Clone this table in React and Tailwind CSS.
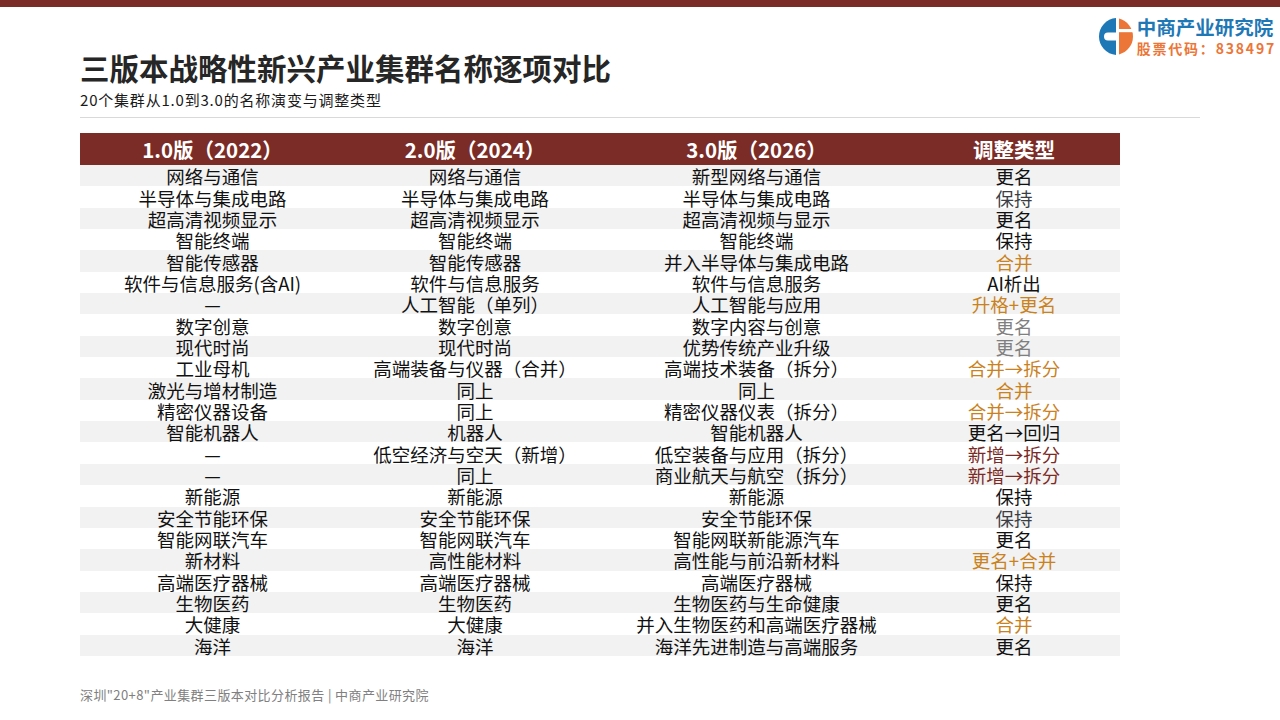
import React from "react";

const BLACK = "text-[#111111]";
const DARK = "text-[#3b3f45]";
const GRAY = "text-[#7f7f7f]";
const ORANGE = "text-[#c9821d]";
const RED = "text-[#7b2a25]";

// 1.0 / 2.0 / 3.0 names, adjustment type, colour of the type
const rows = [
  ["网络与通信", "网络与通信", "新型网络与通信", "更名", BLACK],
  ["半导体与集成电路", "半导体与集成电路", "半导体与集成电路", "保持", DARK],
  ["超高清视频显示", "超高清视频显示", "超高清视频与显示", "更名", BLACK],
  ["智能终端", "智能终端", "智能终端", "保持", BLACK],
  ["智能传感器", "智能传感器", "并入半导体与集成电路", "合并", ORANGE],
  ["软件与信息服务(含AI)", "软件与信息服务", "软件与信息服务", "AI析出", BLACK],
  ["—", "人工智能（单列）", "人工智能与应用", "升格+更名", ORANGE],
  ["数字创意", "数字创意", "数字内容与创意", "更名", GRAY],
  ["现代时尚", "现代时尚", "优势传统产业升级", "更名", GRAY],
  ["工业母机", "高端装备与仪器（合并）", "高端技术装备（拆分）", "合并→拆分", ORANGE],
  ["激光与增材制造", "同上", "同上", "合并", ORANGE],
  ["精密仪器设备", "同上", "精密仪器仪表（拆分）", "合并→拆分", ORANGE],
  ["智能机器人", "机器人", "智能机器人", "更名→回归", BLACK],
  ["—", "低空经济与空天（新增）", "低空装备与应用（拆分）", "新增→拆分", RED],
  ["—", "同上", "商业航天与航空（拆分）", "新增→拆分", RED],
  ["新能源", "新能源", "新能源", "保持", BLACK],
  ["安全节能环保", "安全节能环保", "安全节能环保", "保持", DARK],
  ["智能网联汽车", "智能网联汽车", "智能网联新能源汽车", "更名", BLACK],
  ["新材料", "高性能材料", "高性能与前沿新材料", "更名+合并", ORANGE],
  ["高端医疗器械", "高端医疗器械", "高端医疗器械", "保持", BLACK],
  ["生物医药", "生物医药", "生物医药与生命健康", "更名", BLACK],
  ["大健康", "大健康", "并入生物医药和高端医疗器械", "合并", ORANGE],
  ["海洋", "海洋", "海洋先进制造与高端服务", "更名", BLACK],
];

const cols = "grid grid-cols-[265px_260px_303px_212px]";

function Logo() {
  return (
    <div className="flex items-center gap-[4px]">
      <svg width="37" height="37" viewBox="0 0 37 37">
        <path d="M20 0.06 A18.5 18.5 0 0 0 20 36.94 Z" fill="#1f78b6" />
        <path d="M20.5 14.5 H12 A4 4 0 0 0 12 22.5 H20.5 Z" fill="#ffffff" />
        <path d="M23 0.56 A18.5 18.5 0 0 1 23 36.44 Z" fill="#ec7637" />
        <rect x="22" y="11" width="16" height="3.2" fill="#ffffff" />
      </svg>
      <div className="flex flex-col">
        <span className="text-[19.5px] leading-[20px] font-bold text-[#1f78b6]">中商产业研究院</span>
        <span className="mt-[3px] text-[14px] leading-[16px] tracking-[1.8px] font-bold text-[#ec7637]">
          股票代码：838497
        </span>
      </div>
    </div>
  );
}

export default function App() {
  return (
    <div className="w-[1280px] h-[720px] bg-white overflow-hidden font-['Noto_Sans_CJK_SC','Noto_Sans',sans-serif]">
      {/* top bar */}
      <div className="h-[7px] bg-[#7b2c26]" />

      {/* header */}
      <div className="flex justify-between pl-[80px] pr-[4px]">
        <div className="pt-[42px]">
          <h1 className="text-[29.5px] leading-[36px] font-bold text-[#262626]">
            三版本战略性新兴产业集群名称逐项对比
          </h1>
          <p className="mt-[5px] text-[15px] leading-[20px] tracking-[0.8px] text-[#1a1a1a]">
            20个集群从1.0到3.0的名称演变与调整类型
          </p>
        </div>
        <div className="pt-[10px]">
          <Logo />
        </div>
      </div>

      <div className="ml-[80px] mt-[7px] w-[1120px] h-[1px] bg-[#d9d9d9]" />

      {/* table */}
      <div className="ml-[80px] mt-[15px] w-[1040px]">
        <div className={`${cols} h-[32px] bg-[#7b2c26] text-white text-[20.5px] font-bold`}>
          <div className="flex items-center justify-center">1.0版（2022）</div>
          <div className="flex items-center justify-center">2.0版（2024）</div>
          <div className="flex items-center justify-center">3.0版（2026）</div>
          <div className="flex items-center justify-center">调整类型</div>
        </div>
        {rows.map((r, i) => (
          <div
            key={i}
            className={`${cols} h-[21.35px] text-[18.5px] leading-[19px] ${
              i % 2 === 0 ? "bg-[#f2f2f2]" : "bg-white"
            }`}
          >
            <div className={`flex items-center justify-center pt-[2px] whitespace-nowrap ${BLACK}`}>{r[0]}</div>
            <div className={`flex items-center justify-center pt-[2px] whitespace-nowrap ${BLACK}`}>{r[1]}</div>
            <div className={`flex items-center justify-center pt-[2px] whitespace-nowrap ${BLACK}`}>{r[2]}</div>
            <div className={`flex items-center justify-center pt-[2px] whitespace-nowrap ${r[4]}`}>{r[3]}</div>
          </div>
        ))}
      </div>

      {/* footer */}
      <p className="ml-[80px] mt-[30px] text-[13px] leading-[18px] tracking-[0.4px] text-[#808080]">
        深圳"20+8"产业集群三版本对比分析报告 | 中商产业研究院
      </p>
    </div>
  );
}
